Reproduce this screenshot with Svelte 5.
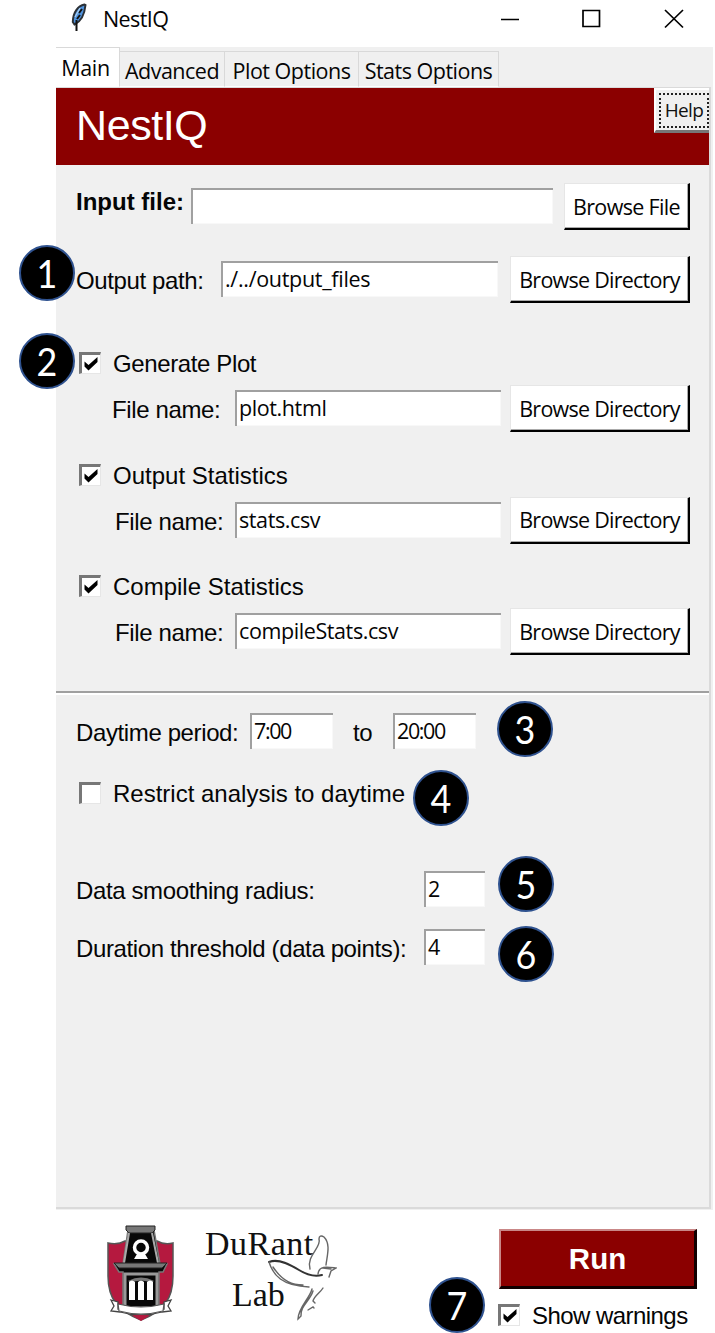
<script>
  const tabs = [
    { name: 'Advanced', w: 105 },
    { name: 'Plot Options', w: 134 },
    { name: 'Stats Options', w: 140 }
  ];
  const outputs = [
    { id: 'plot', title: 'Generate Plot', file: 'plot.html' },
    { id: 'stats', title: 'Output Statistics', file: 'stats.csv' },
    { id: 'compile', title: 'Compile Statistics', file: 'compileStats.csv' }
  ];
  const pins = [
    { n: 1, x: 47, y: 273 },
    { n: 2, x: 47, y: 361 },
    { n: 3, x: 525, y: 729 },
    { n: 4, x: 441, y: 798 },
    { n: 5, x: 526, y: 884 },
    { n: 6, x: 526, y: 954 },
    { n: 7, x: 457, y: 1305 }
  ];
</script>

{#snippet check(on)}
  <span class="check">
    {#if on}
      <svg width="14" height="14" viewBox="0 0 14 14"><path d="M0.500 4.500 4.500 8 13.500 0V5L4.500 13.500 0.500 9.500z" fill="#000" /></svg>
    {/if}
  </span>
{/snippet}

<div class="page">
  <header class="titlebar">
    <svg class="feather" width="18" height="31" viewBox="0 0 18 31">
      <path d="M14.500 2.500C8 4 3 10 2.800 20L4.500 22.500C10 20 14.500 13 15.500 3z" fill="#4f93de" stroke="#2b3036" stroke-width="2" />
      <path d="M12 7 9 11M10 13 7 17M6.500 18 6.500 29" fill="none" stroke="#111" stroke-width="2" />
      <path d="M10 6 5 15" fill="none" stroke="#a9cdf0" stroke-width="1.300" />
    </svg>
    <span class="apptitle">NestIQ</span>
    <svg class="controls" width="184" height="20" viewBox="0 0 184 20" fill="none" stroke="#000" stroke-width="1.700">
      <path d="M1 10.500H19M83 1.500H99.500V17.500H83zM165 1 183 18.500M183 1 165 18.500" />
    </svg>
  </header>

  <main class="window">
    <nav class="tabs">
      <div class="tab active">Main</div>
      {#each tabs as t}
        <div class="tab" style="width:{t.w}px">{t.name}</div>
      {/each}
    </nav>
    <section class="panel">
      <div class="banner">
        <h1>NestIQ</h1>
        <button class="help"><span>Help</span></button>
      </div>

      <div class="row input">
        <b class="label">Input file:</b>
        <div class="entry"></div>
        <button class="browse short">Browse File</button>
      </div>
      <div class="row output">
        <span class="label">Output path:</span>
        <div class="entry">./../output_files</div>
        <button class="browse">Browse Directory</button>
      </div>

      {#each outputs as o}
        <div class="group {o.id}">
          <div class="option">{@render check(true)}<span class="label">{o.title}</span></div>
          <div class="row">
            <span class="label">File name:</span>
            <div class="entry">{o.file}</div>
            <button class="browse">Browse Directory</button>
          </div>
        </div>
      {/each}

      <div class="rule"></div>

      <div class="row day">
        <span class="label">Daytime period:</span>
        <div class="entry">7:00</div>
        <span class="label to">to</span>
        <div class="entry">20:00</div>
      </div>
      <div class="option restrict">{@render check(false)}<span class="label">Restrict analysis to daytime</span></div>
      <div class="row num smooth">
        <span class="label">Data smoothing radius:</span>
        <div class="entry">2</div>
      </div>
      <div class="row num duration">
        <span class="label">Duration threshold (data points):</span>
        <div class="entry">4</div>
      </div>
    </section>
  </main>

  <footer>
    <svg class="crest" width="70" height="98" viewBox="0 0 70 98">
      <path d="M2 18Q12 20 19 16H51Q58 20 67 18V51C67 74 58 86 35 95C12 86 2 74 2 51z" fill="#b5193f" stroke="#555" stroke-width="1.500" />
      <path d="M22 5H48L54 39H61L57 47H53V82H17V47H13L8 39H17z" fill="#080808" stroke="#777" stroke-width="1.500" />
      <path d="M20 1H49V5L46 8H23L20 5z" fill="#777" stroke="#222" />
      <path d="M23 8 18 38M46 8 52 38" stroke="#aaa" stroke-width="2" />
      <path d="M8 38H61L56 43H13z" fill="#777" stroke="#222" />
      <circle cx="35" cy="22.500" r="6.500" fill="#080808" stroke="#fff" stroke-width="3.500" />
      <path d="M31 29H39L42 34H28z" fill="#fff" />
      <path d="M19 80V49H51V80" fill="none" stroke="#999" stroke-width="3" />
      <path d="M23 57Q35 51 47 57" fill="none" stroke="#777" stroke-width="3" />
      <path d="M23 57Q26 54 29 57V75H23zM32 57Q35 54 38 57V75H32zM41 57Q44 54 47 57V75H41z" fill="#fff" />
      <path d="M5 75 12 77V84H58V77L65 75 62 81 65 86 56 87Q35 93 14 87L5 86 8 81z" fill="#fff" stroke="#444" stroke-width="1.300" />
      <path d="M12 79Q35 85 58 79L57 86Q35 92 13 86z" fill="#fff" stroke="#555" stroke-width="1.200" />
      <path d="M27 91Q35 89 43 91L35 96z" fill="#b5193f" />
    </svg>
    <div class="lab">
      <div class="durant">DuRant</div>
      <div class="lab2">Lab</div>
      <svg class="bird" width="72" height="92" viewBox="0 0 72 92" fill="none" stroke="#666" stroke-width="1.400" stroke-linecap="round">
        <path d="M45 37C41 24 57 15 54 7C54 4 56 3 59 5C66 12 62 24 61 33" />
        <path d="M4 30C14 26 26 33 34 38C42 43 50 45 57 43" stroke="#333" stroke-width="2" />
        <path d="M4 30C8 43 17 54 44 55M8 35C18 50 28 53 38 53" />
        <path d="M53 42C54 33 63 35 71 36L66 39 64 45M58 36 66 37" />
        <path d="M47 57C45 66 33 76 33 87L36 84C35 74 45 69 48 59M58 56C55 61 49 64 48 69L50 71M43 78 48 75 49 76" />
      </svg>
    </div>
    <div class="actions">
      <button class="run">Run</button>
      <div class="option">{@render check(true)}<span class="label">Show warnings</span></div>
    </div>
  </footer>

  {#each pins as p}
    <div class="pin" style="left:{p.x - 28}px;top:{p.y - 28}px"><span>{p.n}</span></div>
  {/each}
</div>

<style>
  .page { position: relative; width: 715px; height: 1333px; overflow: hidden; background: #fff; color: #050505; font-family: "Open Sans", sans-serif; font-size: 21.5px; letter-spacing: -0.75px; box-sizing: border-box; }
  .page * { box-sizing: border-box; }
  button { font: inherit; letter-spacing: inherit; color: inherit; padding: 0; margin: 0; border-radius: 0; white-space: nowrap; }
  .titlebar { display: flex; height: 47px; padding-left: 70px; }
  .feather { margin-top: 2px; }
  .apptitle { margin-left: 15px; line-height: 38px; width: 80px; letter-spacing: -0.6px; }
  .controls { margin: 9px 0 0 317px; }
  .window { margin-left: 56px; width: 657px; height: 1163px; background: #f0f0f0; }
  .tabs { display: flex; height: 40px; align-items: flex-end; }
  .tab { height: 36px; border: 1px solid #d9d9d9; border-left: 0; border-bottom-color: #fff; line-height: 38px; text-align: center; white-space: nowrap; letter-spacing: -0.5px; }
  .tab.active { width: 64px; height: 40px; background: #fff; line-height: 39px; padding-right: 4px; letter-spacing: -0.3px; }
  .panel { width: 655px; height: 1122px; border: solid #dadada; border-width: 1px 2px 2px 0; }
  .banner { display: flex; justify-content: space-between; height: 77px; background: #8b0000; color: #fff; }
  h1 { margin: 0 0 0 20px; font: 400 43px/75px "Liberation Sans", sans-serif; letter-spacing: -0.4px; }
  .help { width: 55px; height: 45px; background: #f0f0f0; border: solid #fff; border-width: 2px 0 3px 2px; border-bottom-color: #777; padding: 3px 0 2px 3px; color: #111; font-size: 19px; letter-spacing: -0.6px; }
  .help span { display: block; height: 35px; border: 2px dotted #222; line-height: 30px; }
  .row, .option { display: flex; align-items: flex-start; }
  .row { height: 47px; padding-left: 20px; }
  .label { font-family: "Liberation Sans", sans-serif; font-size: 24px; line-height: 28px; letter-spacing: -0.38px; white-space: nowrap; }
  .input .label, .restrict .label, .stats .option .label, .compile .option .label { letter-spacing: 0; }
  .entry { height: 36px; background: #fff; border: solid #a0a0a0; border-width: 2px 0 0 2px; box-shadow: inset -1px -1px #f8f8f8; padding-left: 2px; line-height: 31px; letter-spacing: -0.4px; white-space: nowrap; flex: none; }
  .browse { flex: none; width: 180px; height: 47px; background: #fff; border: solid #e6e6e6; border-width: 1px 2px 2px 1px; border-right-color: #000; border-bottom-color: #000; box-shadow: inset -1px -1px #aaa; line-height: 43px; }
  .browse.short { width: 126px; letter-spacing: -0.65px; }
  .input { margin-top: 18px; }
  .input .label { width: 115px; margin-top: 5px; }
  .input .entry { width: 362px; margin: 5px 11px 0 0; }
  .output { margin-top: 26px; }
  .output .label { width: 145px; margin-top: 11px; }
  .output .entry { width: 277px; margin: 5px 12px 0 0; letter-spacing: -0.3px; }
  .option { height: 28px; padding-left: 23px; }
  .check { flex: none; width: 22px; height: 22px; margin: 2px 12px 0 0; background: #fff; border: solid #777; border-width: 3px 1px 1px 3px; border-right-color: #e6e6e6; border-bottom-color: #e6e6e6; padding: 2px; }
  .check svg { display: block; }
  .group { height: 82px; margin-top: 29.500px; }
  .group.plot { margin-top: 47px; }
  .group .row { margin-top: 7px; padding-left: 59px; }
  .group.plot .row { padding-left: 56px; }
  .group .row .label { width: 120px; margin-top: 11px; }
  .group.plot .row .label { width: 123px; }
  .group .entry { width: 266px; margin: 5px 9px 0 0; }
  .rule { height: 4px; margin-top: 36px; border-top: 2px solid #a0a0a0; border-bottom: 2px solid #fff; }
  .day { height: 36px; margin-top: 18px; }
  .day .label { width: 174px; margin-top: 6px; }
  .day .entry { width: 83px; letter-spacing: -1.400px; }
  .day .label.to { width: 40px; margin-left: 20px; }
  .restrict { margin-top: 31px; }
  .num { height: 36px; }
  .num .label { width: 348px; margin-top: 6px; }
  .num .entry { width: 61px; }
  .smooth { margin-top: 63px; }
  .duration { margin-top: 22px; }
  footer { display: flex; height: 123px; padding-left: 106px; }
  .crest { margin-top: 15px; flex: none; }
  .lab { position: relative; width: 323px; padding-left: 29px; font-family: "Liberation Serif", serif; color: #111; letter-spacing: 0; }
  .durant { margin-top: 13px; font-size: 34px; line-height: 42px; letter-spacing: 0.5px; }
  .lab2 { margin: 9px 0 0 27px; font-size: 34px; line-height: 42px; }
  .bird { position: absolute; left: 89px; top: 22px; }
  .actions { width: 198px; margin-top: 19px; }
  .run { display: block; width: 198px; height: 60px; background: #8b0000; border: solid #c98787; border-width: 2px 3px 3px 2px; border-right-color: #100; border-bottom-color: #100; color: #fff; font: 700 29.500px/54px "Liberation Sans", sans-serif; letter-spacing: 0; }
  .actions .option { margin-top: 13px; padding-left: 0; margin-left: -1px; }
  .actions .label { letter-spacing: -0.55px; }
  .pin { position: absolute; width: 56px; height: 56px; border-radius: 50%; border: 2px solid #2f528f; background: #000; color: #fff; font: 400 39px/53px Lato, sans-serif; letter-spacing: 0; text-align: center; }
  .pin span { display: block; transform: scaleX(0.92); }
</style>
